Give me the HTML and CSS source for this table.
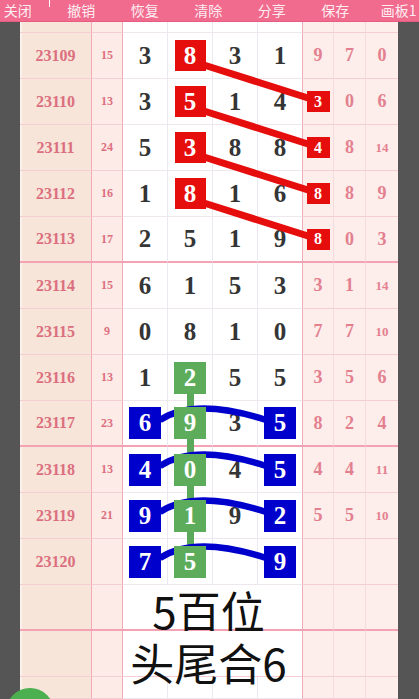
FILE: index.html
```html
<!DOCTYPE html>
<html lang="zh">
<head>
<meta charset="utf-8">
<link rel="stylesheet" href="styles.css">
</head>
<body>
<div class="toolbar">
  <span class="tb first">关闭</span>
  <span class="tb">撤销</span>
  <span class="tb">恢复</span>
  <span class="tb">清除</span>
  <span class="tb">分享</span>
  <span class="tb">保存</span>
  <span class="tb">画板1</span>
</div>
<div class="main">
  <div class="side"></div>
  <div class="sheet">
    <div class="row partial-top">
      <div class="c issue"></div><div class="c sum"></div><div class="c d"></div><div class="c d"></div><div class="c d"></div><div class="c d d4"></div><div class="c r"></div><div class="c r"></div><div class="c r last"></div>
    </div>
    <div class="row">
      <div class="c issue">23109</div><div class="c sum">15</div>
      <div class="c d">3</div><div class="c d"><span class="box red">8</span></div><div class="c d">3</div><div class="c d d4">1</div>
      <div class="c r">9</div><div class="c r">7</div><div class="c r last">0</div>
    </div>
    <div class="row">
      <div class="c issue">23110</div><div class="c sum">13</div>
      <div class="c d">3</div><div class="c d"><span class="box red">5</span></div><div class="c d">1</div><div class="c d d4">4</div>
      <div class="c r"><span class="mini">3</span></div><div class="c r">0</div><div class="c r last">6</div>
    </div>
    <div class="row">
      <div class="c issue">23111</div><div class="c sum">24</div>
      <div class="c d">5</div><div class="c d"><span class="box red">3</span></div><div class="c d">8</div><div class="c d d4">8</div>
      <div class="c r"><span class="mini">4</span></div><div class="c r">8</div><div class="c r last small">14</div>
    </div>
    <div class="row">
      <div class="c issue">23112</div><div class="c sum">16</div>
      <div class="c d">1</div><div class="c d"><span class="box red">8</span></div><div class="c d">1</div><div class="c d d4">6</div>
      <div class="c r"><span class="mini">8</span></div><div class="c r">8</div><div class="c r last">9</div>
    </div>
    <div class="row sep">
      <div class="c issue">23113</div><div class="c sum">17</div>
      <div class="c d">2</div><div class="c d">5</div><div class="c d">1</div><div class="c d d4">9</div>
      <div class="c r"><span class="mini">8</span></div><div class="c r">0</div><div class="c r last">3</div>
    </div>
    <div class="row">
      <div class="c issue">23114</div><div class="c sum">15</div>
      <div class="c d">6</div><div class="c d">1</div><div class="c d">5</div><div class="c d d4">3</div>
      <div class="c r">3</div><div class="c r">1</div><div class="c r last small">14</div>
    </div>
    <div class="row">
      <div class="c issue">23115</div><div class="c sum">9</div>
      <div class="c d">0</div><div class="c d">8</div><div class="c d">1</div><div class="c d d4">0</div>
      <div class="c r">7</div><div class="c r">7</div><div class="c r last small">10</div>
    </div>
    <div class="row">
      <div class="c issue">23116</div><div class="c sum">13</div>
      <div class="c d">1</div><div class="c d"><span class="box green">2</span></div><div class="c d">5</div><div class="c d d4">5</div>
      <div class="c r">3</div><div class="c r">5</div><div class="c r last">6</div>
    </div>
    <div class="row sep">
      <div class="c issue">23117</div><div class="c sum">23</div>
      <div class="c d"><span class="box blue">6</span></div><div class="c d"><span class="box green">9</span></div><div class="c d">3</div><div class="c d d4"><span class="box blue">5</span></div>
      <div class="c r">8</div><div class="c r">2</div><div class="c r last">4</div>
    </div>
    <div class="row">
      <div class="c issue">23118</div><div class="c sum">13</div>
      <div class="c d"><span class="box blue">4</span></div><div class="c d"><span class="box green">0</span></div><div class="c d">4</div><div class="c d d4"><span class="box blue">5</span></div>
      <div class="c r">4</div><div class="c r">4</div><div class="c r last small">11</div>
    </div>
    <div class="row">
      <div class="c issue">23119</div><div class="c sum">21</div>
      <div class="c d"><span class="box blue">9</span></div><div class="c d"><span class="box green">1</span></div><div class="c d">9</div><div class="c d d4"><span class="box blue">2</span></div>
      <div class="c r">5</div><div class="c r">5</div><div class="c r last small">10</div>
    </div>
    <div class="row">
      <div class="c issue">23120</div><div class="c sum"></div>
      <div class="c d"><span class="box blue">7</span></div><div class="c d"><span class="box green">5</span></div><div class="c d"></div><div class="c d d4"><span class="box blue">9</span></div>
      <div class="c r"></div><div class="c r"></div><div class="c r last"></div>
    </div>
    <div class="row sep">
      <div class="c issue"></div><div class="c sum"></div>
      <div class="c note note1">5百位</div>
      <div class="c r"></div><div class="c r"></div><div class="c r last"></div>
    </div>
    <div class="row">
      <div class="c issue"></div><div class="c sum"></div>
      <div class="c note note2">头尾合6</div>
      <div class="c r"></div><div class="c r"></div><div class="c r last"></div>
    </div>
    <div class="row partial-bottom">
      <div class="c issue"></div><div class="c sum"></div><div class="c d"></div><div class="c d"></div><div class="c d"></div><div class="c d d4"></div><div class="c r"></div><div class="c r"></div><div class="c r last"></div>
    </div>
    <svg class="overlay" width="378" height="677" viewBox="0 0 378 677">
      <g stroke="#e60d0d" stroke-width="7" stroke-linecap="butt">
        <line x1="184" y1="43" x2="288" y2="76"/>
        <line x1="184" y1="89" x2="288" y2="122"/>
        <line x1="184" y1="135" x2="288" y2="168"/>
        <line x1="184" y1="181" x2="288" y2="214"/>
      </g>
      <line x1="170.5" y1="356" x2="170.5" y2="540" stroke="#5aa85a" stroke-width="7"/>
      <g fill="none" stroke="#0000cd" stroke-width="6.5">
        <path d="M140 398 Q175 375 246 398"/>
        <path d="M140 444 Q175 421 246 444"/>
        <path d="M140 490 Q175 467 246 490"/>
        <path d="M140 536 Q175 513 246 536"/>
      </g>
    </svg>
  </div>
  <div class="side right"></div>
</div>
<div class="fab-clip"><div class="fab"></div></div>
</body>
</html>
```

FILE: styles.css
```css
html, body {
  margin: 0;
  padding: 0;
}
body {
  width: 419px;
  height: 699px;
  overflow: hidden;
  background: #555555;
  font-family: "Liberation Serif", "Times New Roman", serif;
  position: relative;
}
.toolbar {
  height: 21px;
  border-bottom: 1px solid #e65b80;
  background: #f16b8e;
  display: flex;
  margin-left: -14px;
  white-space: nowrap;
  overflow: hidden;
}
.tb {
  flex: 0 0 63.5px;
  text-align: center;
  font-family: "Noto Sans CJK SC", "Noto Sans", sans-serif;
  font-size: 14px;
  line-height: 20px;
  color: #fdeef2;
  position: relative;
}
.tb.first::after {
  content: "";
  position: absolute;
  right: 0;
  top: 0;
  width: 1px;
  height: 7px;
  background: #fff;
}
.main {
  display: flex;
  height: 677px;
}
.side {
  width: 20px;
  background: #555555;
}
.side.right {
  width: 21px;
}
.sheet {
  position: relative;
  width: 378px;
  overflow: hidden;
}
.row {
  display: grid;
  grid-template-columns: 72px 31px 45px 45px 45px 45px 31px 32px 32px;
  grid-template-rows: 46px;
  height: 46px;
}
.row.partial-top {
  height: 11px;
  grid-template-rows: 11px;
}
.row.partial-bottom {
  height: 22px;
  grid-template-rows: 22px;
}
.c {
  box-sizing: border-box;
  display: flex;
  align-items: center;
  justify-content: center;
  min-height: 0;
  border-bottom: 1px solid #f5cdd4;
  border-right: 1px solid #f0e4e8;
  font-weight: bold;
}
.issue {
  background: #f6e5d8;
  border-right: 1px solid #f2a9b8;
  color: #dc6f7f;
  font-size: 16px;
  box-shadow: inset 2px 0 0 #fbf1ea;
}
.sum {
  background: #fdebe7;
  border-right: 1px solid #f2a9b8;
  color: #dc6f7f;
  font-size: 12px;
}
.d {
  background: #ffffff;
  color: #353535;
  font-size: 25px;
  border-right: 1px solid #ebe8f0;
  border-bottom-color: #eee8ee;
}
.d4 {
  border-right: 1px solid #f2a9b8;
}
.r {
  background: #fdedeb;
  color: #e3808f;
  font-size: 18px;
  border-right: 1px solid #f6dadd;
}
.r.small {
  font-size: 13px;
}
.r.last {
  border-right: none;
}
.row.sep .c {
  border-bottom: 2px solid #f3a3b4;
}
.note {
  grid-column: 3 / span 4;
  height: 46px;
  background: #ffffff;
  border-right: 1px solid #f2a9b8;
  font-family: "Noto Sans CJK SC", "Noto Sans", sans-serif;
  font-weight: normal;
  font-size: 44px;
  line-height: 44px;
  color: #111111;
  padding-right: 8px;
  align-items: flex-start;
  overflow: visible;
  position: relative;
  z-index: 3;
}
.note1 {
  padding-top: 3px;
}
.note2 {
  padding-top: 9px;
}
.box {
  position: relative;
  z-index: 2;
  display: flex;
  align-items: center;
  justify-content: center;
  width: 32px;
  height: 32px;
  color: #ffffff;
  font-size: 25px;
  font-weight: bold;
}
.box.red {
  background: #e60d0d;
  width: 31px;
  height: 31px;
}
.box.green {
  background: #5cac5c;
}
.box.blue {
  background: #0000cd;
}
.mini {
  position: relative;
  z-index: 2;
  display: flex;
  align-items: center;
  justify-content: center;
  width: 23px;
  height: 21px;
  background: #e60d0d;
  color: #ffffff;
  font-size: 16px;
  font-weight: bold;
}
.overlay {
  position: absolute;
  left: 0;
  top: 0;
  z-index: 1;
  pointer-events: none;
}
.fab-clip {
  position: absolute;
  left: 6px;
  top: 688px;
  width: 48px;
  height: 11px;
  overflow: hidden;
  z-index: 4;
}
.fab {
  width: 48px;
  height: 48px;
  border-radius: 50%;
  background: #4caf50;
}
```
